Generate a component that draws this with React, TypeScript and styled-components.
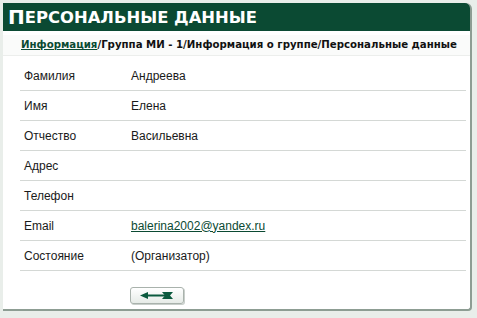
import styled, { createGlobalStyle } from "styled-components";
import React from "react";

const Global = createGlobalStyle`
    html, body {
        margin: 0;
        padding: 0;
        background: #e9eeea;
    }
`;

const Page = styled.div`
    width: 477px;
    height: 318px;
    padding: 3px 0 0 3px;
    box-sizing: border-box;
    background: #e9eeea;
`;

const Panel = styled.div`
    width: 469px;
    height: 308px;
    background: #ffffff;
    border-right: 2px solid #8d9d93;
    border-bottom: 2px solid #8d9d93;
    border-radius: 0 6px 4px 0;
    box-sizing: border-box;
    display: flex;
    flex-direction: column;
`;

const Header = styled.div`
    height: 28px;
    background: #0b4a33;
    border-radius: 0 5px 0 0;
    display: flex;
    align-items: center;
    padding-left: 5px;
    font-family: "DejaVu Sans", Verdana, sans-serif;
    font-weight: bold;
    font-size: 16.4px;
    text-transform: uppercase;
    color: #ffffff;
`;

const BigLetter = styled.span`
    font-size: 20px;
`;

const Crumbs = styled.div`
    margin: 4px 0 0 0;
    padding: 4px 0 5px 18px;
    background: #fafbfa;
    border-bottom: 1px solid #eceeec;
    font-family: "DejaVu Sans", Verdana, sans-serif;
    font-weight: bold;
    font-size: 10.2px;
    color: #111;
    white-space: nowrap;
`;

const CrumbLink = styled.a`
    color: #0b4a33;
    text-decoration: underline;
`;

const Table = styled.div`
    margin: 5px 4px 0 17px;
    display: flex;
    flex-direction: column;
`;

const Row = styled.div`
    height: 30px;
    display: grid;
    grid-template-columns: 107px 1fr;
    align-items: center;
    padding-left: 4px;
    border-bottom: 1px solid #d4d8d5;
    box-sizing: border-box;
    font-family: "Liberation Sans", Arial, sans-serif;
    font-size: 12px;
    color: #1a1a1a;
`;

const Mail = styled.a`
    color: #0b4a33;
    text-decoration: underline;
`;

const Footer = styled.div`
    padding: 16px 0 0 127px;
`;

const BackButton = styled.button`
    width: 54px;
    height: 17px;
    padding: 0;
    border: 1px solid #a9b2ac;
    border-radius: 3px;
    background: linear-gradient(#ffffff, #e6ebe7);
    box-shadow: 1px 1px 0 #c9cfcb;
    display: flex;
    align-items: center;
    justify-content: center;
`;

const rows: [string, React.ReactNode][] = [
    ["Фамилия", "Андреева"],
    ["Имя", "Елена"],
    ["Отчество", "Васильевна"],
    ["Адрес", ""],
    ["Телефон", ""],
    ["Email", <Mail href="#">balerina2002@yandex.ru</Mail>],
    ["Состояние", "(Организатор)"],
];

export default function App() {
    return (
        <Page>
            <Global />
            <Panel>
                <Header>
                    <BigLetter>П</BigLetter>ерсональные данные
                </Header>
                <Crumbs>
                    <CrumbLink href="#">Информация</CrumbLink>/Группа МИ - 1/Информация о группе/Персональные данные
                </Crumbs>
                <Table>
                    {rows.map(([label, value]) => (
                        <Row key={label}>
                            <span>{label}</span>
                            <span>{value}</span>
                        </Row>
                    ))}
                </Table>
                <Footer>
                    <BackButton>
                        <svg width="34" height="9" viewBox="0 0 34 9">
                            <path d="M0 4.5 L8 1 L8 3.5 L26 3.5 L26 5.5 L8 5.5 L8 8 Z" fill="#0b5a3e" />
                            <path d="M22 1 L33 1 L30 4.5 L33 8 L22 8 L25 4.5 Z" fill="#0b5a3e" />
                        </svg>
                    </BackButton>
                </Footer>
            </Panel>
        </Page>
    );
}
